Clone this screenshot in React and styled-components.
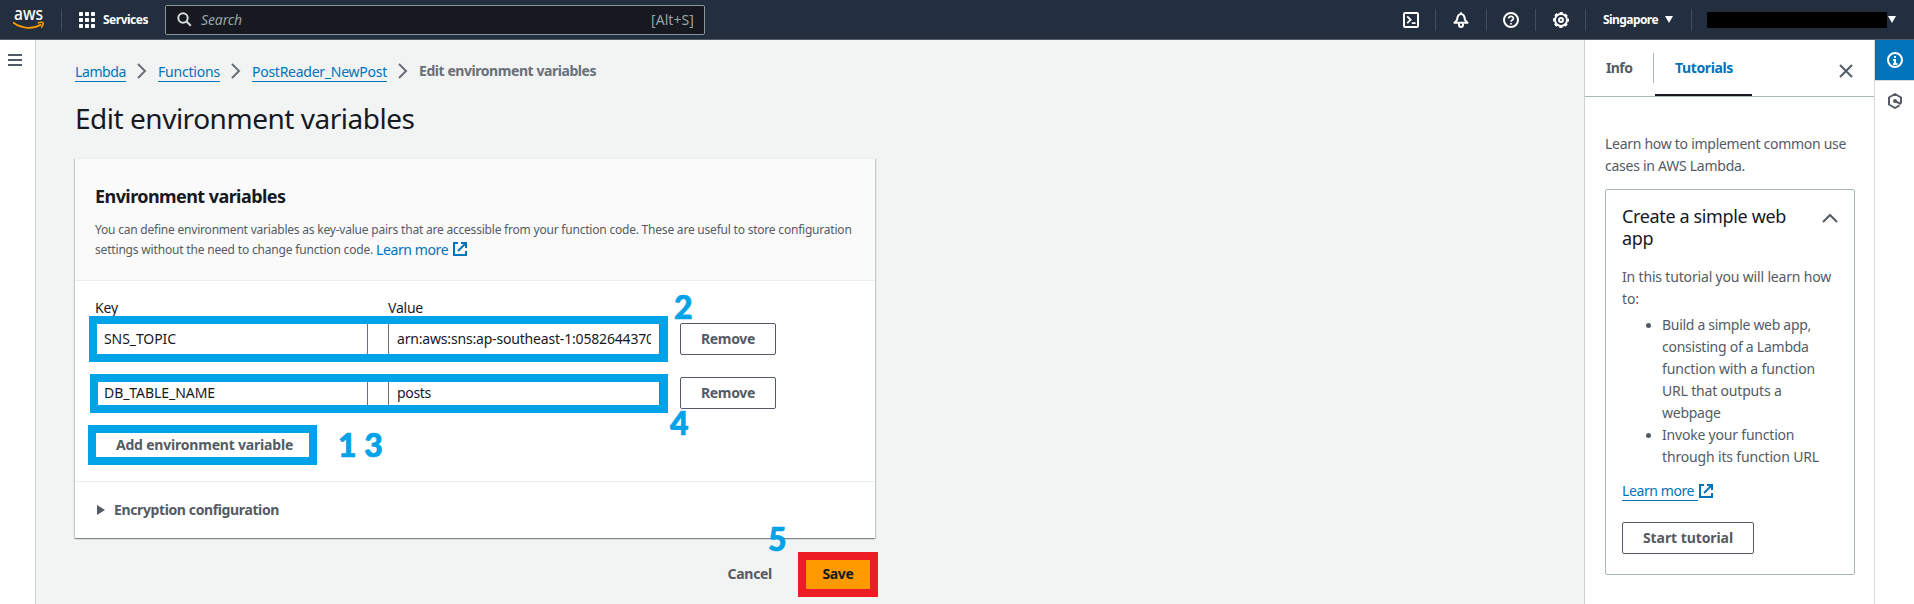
import React from 'react';
import styled, { createGlobalStyle, css } from 'styled-components';

const Global = createGlobalStyle`
  * { box-sizing: border-box; }
  html, body { margin: 0; overflow: hidden; }
  body { font-family: "Noto Sans", "Open Sans", sans-serif; font-size: 14px; line-height: 22px; color: #16191f; background: #f2f3f3; }
  svg { display: block; flex: none; }
  h1, h2, h3, p, ul { margin: 0; padding: 0; }
`;

const Page = styled.div`display: flex; flex-direction: column; height: 604px; width: 1914px;`;
const T = styled.span`letter-spacing: ${p => p.$ls || 0}px; white-space: nowrap;`;

/* Header */
const Header = styled.header`
  display: flex; align-items: center; height: 40px; flex: none;
  padding: 0 18px 0 13px; background: #232f3e; border-bottom: 1px solid #545b64; color: #fff;
`;
const Divider = styled.div`width: 1px; height: 22px; background: #414d5c; margin: 0 ${p => p.$r}px 0 ${p => p.$l}px;`;
const Services = styled.div`
  display: flex; align-items: center; gap: 8px; font-size: 12px; font-weight: 700; width: 70px; margin-right: 16px;
`;
const SearchBox = styled.div`
  display: flex; align-items: center; width: 540px; height: 30px; padding: 0 10px 0 11px;
  background: #16191f; border: 1px solid #879596; border-radius: 2px; color: #95a5a6;
`;
const SearchText = styled.span`flex: 1; margin-left: 9px; font-style: italic; letter-spacing: -0.12px;`;
const HeaderRight = styled.div`display: flex; align-items: center; margin-left: auto;`;
const Region = styled.div`display: flex; align-items: center; gap: 7px; font-size: 12px; font-weight: 700; width: 70px;`;
const Redacted = styled.div`width: 180px; height: 16px; background: #000; margin-right: 1px;`;

/* Body */
const Body = styled.div`display: flex; flex: 1; min-height: 0;`;
const SideNav = styled.nav`width: 36px; padding: 14px 0 0 8px; background: #fff; border-right: 1px solid #ccd1d1;`;
const Main = styled.main`flex: 1; padding: 20px 0 0 39px;`;
const Crumbs = styled.div`display: flex; align-items: center; height: 22px; color: #687078;`;
const CrumbLink = styled.a`
  color: #0073bb; letter-spacing: ${p => p.$ls}px; width: ${p => p.$w}px; height: 21px; line-height: 22px;
  border-bottom: 1px solid #0073bb; white-space: nowrap;
`;
const Title = styled.h1`margin-top: 18px; font-size: 28px; line-height: 36px; font-weight: 400; letter-spacing: -0.48px;`;
const Content = styled.div`width: 800px;`;
const Card = styled.section`
  margin-top: 22px; width: 800px; background: #fff; border-top: 1px solid #eaeded;
  box-shadow: 0 1px 1px 0 rgba(0,28,36,.3), 1px 1px 1px 0 rgba(0,28,36,.15), -1px 1px 1px 0 rgba(0,28,36,.15);
`;
const CardHeader = styled.div`height: 122px; padding: 26px 20px 0; background: #fafafa; border-bottom: 1px solid #eaeded;`;
const CardTitle = styled.h2`font-size: 18px; line-height: 22px; letter-spacing: -0.57px;`;
const Desc = styled.div`margin-top: 13px; font-size: 12px; color: #545b64;`;
const DescLine = styled.div`display: flex; height: 20px; line-height: 20px; white-space: nowrap; letter-spacing: ${p => p.$ls}px;`;
const MoreLink = styled.a`
  display: inline-flex; gap: ${p => p.$gap}px; align-items: flex-start; color: #0073bb; font-size: 14px; letter-spacing: -0.4px; margin-left: ${p => p.$ml || 0}px;
`;
const MoreText = styled.span`${p => p.$underline && css`border-bottom: 1px solid #0073bb; height: 21px; width: 76px;`}`;
const FormBody = styled.div`height: 200px; padding: 16px 20px 0;`;
const Grid = styled.div`display: grid; grid-template-columns: 273px 272px 96px; column-gap: 20px;`;
const Labels = styled(Grid)`margin-bottom: 4px;`;
const FormRow = styled(Grid)`position: relative; margin-bottom: ${p => p.$mb}px;`;
const Input = styled.div`
  height: 32px; padding: 4px 8px; border: 1px solid #687078; border-radius: 2px; background: #fff;
`;
const InputText = styled.div`overflow: hidden; white-space: nowrap; letter-spacing: ${p => p.$ls}px;`;
const Button = styled.button`
  height: 32px; width: ${p => p.$w}px; padding: 0 0 1px; border: 1px solid #545b64; border-radius: 2px; background: #fff;
  font: 700 14px/22px "Noto Sans", sans-serif; color: #545b64; letter-spacing: ${p => p.$ls || 0}px; white-space: nowrap;
`;
const Frame = styled.div`
  position: absolute; left: ${p => p.$x}px; top: ${p => p.$y}px; width: ${p => p.$w}px; height: ${p => p.$h}px;
  border: 8px solid #00a2e8;
`;
const StepMark = styled.span`
  position: absolute; left: ${p => p.$x}px; top: ${p => p.$y}px; font: 900 32px/32px Lato, sans-serif; color: #00a2e8;
  -webkit-text-stroke: 0.7px #00a2e8; white-space: pre;
`;
const Encryption = styled.div`
  display: flex; align-items: center; gap: 9px; height: 57px; padding-left: 22px; border-top: 1px solid #eaeded; font-weight: 700; color: #545b64;
`;
const Actions = styled.div`
  position: relative; display: flex; align-items: center; justify-content: flex-end; gap: 26px; margin: 14px -3px 0 0; font-weight: 700; color: #545b64;
`;
const Cancel = styled.span`letter-spacing: -0.3px; padding-bottom: 1px;`;
const Save = styled.button`
  width: 80px; height: 45px; padding: 0 0 2px; border: 8px solid #ed1c24; background: #ff9900; color: #16191f;
  font: 700 14px/22px "Noto Sans", sans-serif; letter-spacing: -0.36px;
`;

/* Help panel */
const Panel = styled.aside`width: 290px; background: #fff; border-left: 1px solid #ccd1d1;`;
const Tabs = styled.div`display: flex; height: 57px; border-bottom: 1px solid #aab7b8; font-weight: 700;`;
const Tab = styled.div`
  height: 56px; padding: 17px 0 0 ${p => p.$pl}px; width: ${p => p.$w}px; letter-spacing: ${p => p.$ls}px;
  color: ${p => p.$active ? '#0073bb' : '#545b64'};
  border-bottom: ${p => p.$active ? '2px solid #16191f' : '0'};
`;
const TabDivider = styled.div`width: 1px; height: 30px; margin: 13px 1px 0 0; background: #aab7b8;`;
const CloseSlot = styled.div`margin: 24px 21px 0 auto;`;
const PanelBody = styled.div`padding: 36px 19px 0 20px; color: #545b64;`;
const Line = styled.div`white-space: nowrap; letter-spacing: ${p => p.$ls}px;`;
const Tutorial = styled.div`height: 386px; margin-top: 12px; padding: 15px 16px 0 16px; border: 1px solid #aab7b8; border-radius: 2px;`;
const TutorialHead = styled.div`display: flex; justify-content: space-between; margin-bottom: 17px;`;
const TutorialTitle = styled.h3`font-size: 18px; font-weight: 400; color: #16191f; letter-spacing: -0.36px;`;
const List = styled.ul`margin: 4px 0 12px 24px; list-style: none;`;
const Item = styled.li`display: flex; gap: 11px;`;
const Bullet = styled.span`flex: none; width: 5px; height: 5px; margin-top: 9px; border-radius: 50%; background: #545b64;`;
const LearnRow = styled.div`height: 22px; margin-bottom: 20px;`;

const Strip = styled.div`width: 40px; background: #fff; border-left: 1px solid #d5dbdb;`;
const StripItem = styled.div`
  display: flex; align-items: center; justify-content: center; height: ${p => p.$active ? 41 : 40}px;
  background: ${p => p.$active ? '#0073bb' : '#fff'}; border-bottom: ${p => p.$active ? '1px solid #d5dbdb' : '0'};
`;

const Logo = () => (
  <svg width="32" height="39" viewBox="0 0 32 39">
    <text x="1" y="20" fontFamily="Noto Sans, sans-serif" fontWeight="500" fontSize="18" fill="#fff" textLength="29" lengthAdjust="spacingAndGlyphs">aws</text>
    <path d="M0.5 22.8C8.5 28.7 19.5 29.6 27.6 24.8" fill="none" stroke="#ff9900" strokeWidth="1.8" strokeLinecap="round" />
    <path d="M24.6 23.1C27 22.2 29.6 22.2 30.2 22.8C30.7 23.6 29.6 26.2 28.2 27.6" fill="none" stroke="#ff9900" strokeWidth="1.5" />
  </svg>
);
const GridIcon = () => (
  <svg width="16" height="16" viewBox="0 0 16 16" fill="#fff">
    {[0, 6, 12].map(y => [0, 6, 12].map(x => <rect key={x + '-' + y} x={x} y={y} width="4" height="4" rx="0.7" />))}
  </svg>
);
const SearchIcon = () => (
  <svg width="15" height="15" viewBox="0 0 15 15" fill="none" stroke="#d5dbdb" strokeWidth="2">
    <circle cx="6" cy="6" r="4.7" /><path d="M9.3 9.3L13.8 13.8" />
  </svg>
);
const stroke = { fill: 'none', stroke: '#fff', strokeWidth: 2, strokeLinejoin: 'round' };
const ShellIcon = () => (
  <svg width="16" height="16" viewBox="0 0 16 16" {...stroke}>
    <rect x="1" y="1" width="14" height="14" rx="1" /><path d="M4.2 4.4L7.6 7.8L4.2 11.2M8.8 11.2H12.6" strokeWidth="1.8" strokeLinejoin="miter" />
  </svg>
);
const BellIcon = () => (
  <svg width="16" height="16" viewBox="0 0 16 16" {...stroke}>
    <path d="M8 0.3V2M1.4 10.8H14.6L11.9 7.8C11.6 4.2 10.6 2 8 2S4.4 4.2 4.1 7.8Z" />
    <path d="M6 11.5V13A2 2 0 0 0 10 13V11.5" />
  </svg>
);
const HelpIcon = () => (
  <svg width="16" height="16" viewBox="0 0 16 16" {...stroke}>
    <circle cx="8" cy="8" r="7" /><path d="M5.6 6.4C5.6 3.7 10.4 3.7 10.4 6.4C10.4 8 8 8 8 9.8M8 10.9V12.6" strokeWidth="1.7" />
  </svg>
);
const GearIcon = () => (
  <svg width="16" height="16" viewBox="0 0 16 16" {...stroke}>
    <circle cx="8" cy="8" r="6" />
    <circle cx="8" cy="8" r="7.2" strokeWidth="1.6" strokeDasharray="3.2 2.455" strokeDashoffset="1.6" />
    <circle cx="8" cy="8" r="2" />
  </svg>
);
const Caret = () => <svg width="8" height="7" viewBox="0 0 8 7"><path d="M0 0H8L4 7Z" fill="#fff" /></svg>;
const Chevron = () => (
  <svg width="32" height="16" viewBox="0 0 32 16"><path d="M12 1L19 8L12 15" fill="none" stroke="#687078" strokeWidth="2" /></svg>
);
const External = () => (
  <svg width="14" height="14" viewBox="0 0 14 14" fill="none" stroke="#0073bb" strokeWidth="2">
    <path d="M5 1H1V13H13V9" /><path d="M8 1H13V6" /><path d="M13 1L5 9" />
  </svg>
);
const IconDown = styled.span`padding-top: ${p => p.$t}px;`;

export default function App() {
  return (
    <Page>
      <Global />
      <Header>
        <Logo />
        <Divider $l={16} $r={17} />
        <Services><GridIcon /><T $ls={-0.5}>Services</T></Services>
        <SearchBox><SearchIcon /><SearchText>Search</SearchText><T $ls={0.07}>[Alt+S]</T></SearchBox>
        <HeaderRight>
          <ShellIcon /><Divider $l={16} $r={17} />
          <BellIcon /><Divider $l={17} $r={16} />
          <HelpIcon /><Divider $l={16} $r={17} />
          <GearIcon /><Divider $l={16} $r={17} />
          <Region><T $ls={-0.57}>Singapore</T><Caret /></Region>
          <Divider $l={18} $r={15} />
          <Redacted /><Caret />
        </HeaderRight>
      </Header>
      <Body>
        <SideNav>
          <svg width="14" height="12" viewBox="0 0 14 12" fill="#545b64"><path d="M0 0H14V2H0ZM0 5H14V7H0ZM0 10H14V12H0Z" /></svg>
        </SideNav>
        <Main>
          <Crumbs>
            <CrumbLink $ls={-0.39} $w={51}>Lambda</CrumbLink><Chevron />
            <CrumbLink $ls={-0.2} $w={62}>Functions</CrumbLink><Chevron />
            <CrumbLink $ls={-0.26} $w={135}>PostReader_NewPost</CrumbLink><Chevron />
            <b><T $ls={-0.44}>Edit environment variables</T></b>
          </Crumbs>
          <Title>Edit environment variables</Title>
          <Content>
            <Card>
              <CardHeader>
                <CardTitle>Environment variables</CardTitle>
                <Desc>
                  <DescLine $ls={-0.21}>You can define environment variables as key-value pairs that are accessible from your function code. These are useful to store configuration</DescLine>
                  <DescLine $ls={-0.18}>
                    settings without the need to change function code.
                    <MoreLink $ml={3} $gap={5}>Learn more <IconDown $t={2}><External /></IconDown></MoreLink>
                  </DescLine>
                </Desc>
              </CardHeader>
              <FormBody>
                <Labels><T $ls={-0.14}>Key</T><T $ls={-0.23}>Value</T></Labels>
                <FormRow $mb={22}>
                  <Input><InputText $ls={-0.08}>SNS_TOPIC</InputText></Input>
                  <Input><InputText $ls={-0.18}>arn:aws:sns:ap-southeast-1:0582644370</InputText></Input>
                  <Button $w={96} $ls={-0.34}>Remove</Button>
                  <Frame $x={-6} $y={-7} $w={579} $h={46} />
                  <StepMark $x={579} $y={-32}>2</StepMark>
                </FormRow>
                <FormRow $mb={20}>
                  <Input><InputText $ls={-0.06}>DB_TABLE_NAME</InputText></Input>
                  <Input><InputText $ls={-0.31}>posts</InputText></Input>
                  <Button $w={96} $ls={-0.34}>Remove</Button>
                  <Frame $x={-5} $y={-3} $w={578} $h={39} />
                  <StepMark $x={575} $y={30}>4</StepMark>
                </FormRow>
                <FormRow $mb={0}>
                  <Button $w={219} $ls={-0.2}>Add environment variable</Button>
                  <Frame $x={-7} $y={-4} $w={229} $h={40} />
                  <StepMark $x={243} $y={0}>1 3</StepMark>
                </FormRow>
              </FormBody>
              <Encryption>
                <svg width="8" height="10" viewBox="0 0 8 10"><path d="M0 0L8 5L0 10Z" fill="#545b64" /></svg>
                <T $ls={-0.38}>Encryption configuration</T>
              </Encryption>
            </Card>
            <Actions>
              <Cancel>Cancel</Cancel>
              <Save>Save</Save>
              <StepMark $x={693} $y={-29}>5</StepMark>
            </Actions>
          </Content>
        </Main>
        <Panel>
          <Tabs>
            <Tab $pl={21} $w={68} $ls={-0.6}>Info</Tab>
            <TabDivider />
            <Tab $active $pl={20} $w={97} $ls={-0.37}>Tutorials</Tab>
            <CloseSlot>
              <svg width="14" height="14" viewBox="0 0 14 14" stroke="#545b64" strokeWidth="2"><path d="M1 1L13 13M13 1L1 13" /></svg>
            </CloseSlot>
          </Tabs>
          <PanelBody>
            <Line $ls={-0.28}>Learn how to implement common use</Line>
            <Line $ls={-0.26}>cases in AWS Lambda.</Line>
            <Tutorial>
              <TutorialHead>
                <TutorialTitle>Create a simple web<br />app</TutorialTitle>
                <IconDown $t={8}>
                  <svg width="16" height="10" viewBox="0 0 16 10"><path d="M1 9L8 2L15 9" fill="none" stroke="#545b64" strokeWidth="2" /></svg>
                </IconDown>
              </TutorialHead>
              <Line $ls={-0.17}>In this tutorial you will learn how</Line>
              <Line $ls={-0.17}>to:</Line>
              <List>
                <Item><Bullet /><div>
                  <Line $ls={-0.3}>Build a simple web app,</Line>
                  <Line $ls={-0.25}>consisting of a Lambda</Line>
                  <Line $ls={-0.14}>function with a function</Line>
                  <Line $ls={-0.18}>URL that outputs a</Line>
                  <Line $ls={-0.25}>webpage</Line>
                </div></Item>
                <Item><Bullet /><div>
                  <Line $ls={-0.2}>Invoke your function</Line>
                  <Line $ls={-0.16}>through its function URL</Line>
                </div></Item>
              </List>
              <LearnRow>
                <MoreLink $gap={1}><MoreText $underline>Learn more</MoreText><IconDown $t={4}><External /></IconDown></MoreLink>
              </LearnRow>
              <Button $w={132} $ls={-0.08}>Start tutorial</Button>
            </Tutorial>
          </PanelBody>
        </Panel>
        <Strip>
          <StripItem $active>
            <svg width="16" height="16" viewBox="0 0 16 16" fill="none" stroke="#fff" strokeWidth="2">
              <circle cx="8" cy="8" r="7" /><path d="M8 4V6M6 8H8V11M6 12H10.4" />
            </svg>
          </StripItem>
          <StripItem>
            <svg width="16" height="16" viewBox="0 0 16 16" fill="none" stroke="#545b64" strokeWidth="2" strokeLinejoin="round">
              <path d="M12.5 12.4L8 15L2 11.5V4.5L8 1L14 4.5V10.5" /><circle cx="8" cy="8" r="2" fill="#545b64" stroke="none" /><path d="M8 8L14 11.2" />
            </svg>
          </StripItem>
        </Strip>
      </Body>
    </Page>
  );
}
